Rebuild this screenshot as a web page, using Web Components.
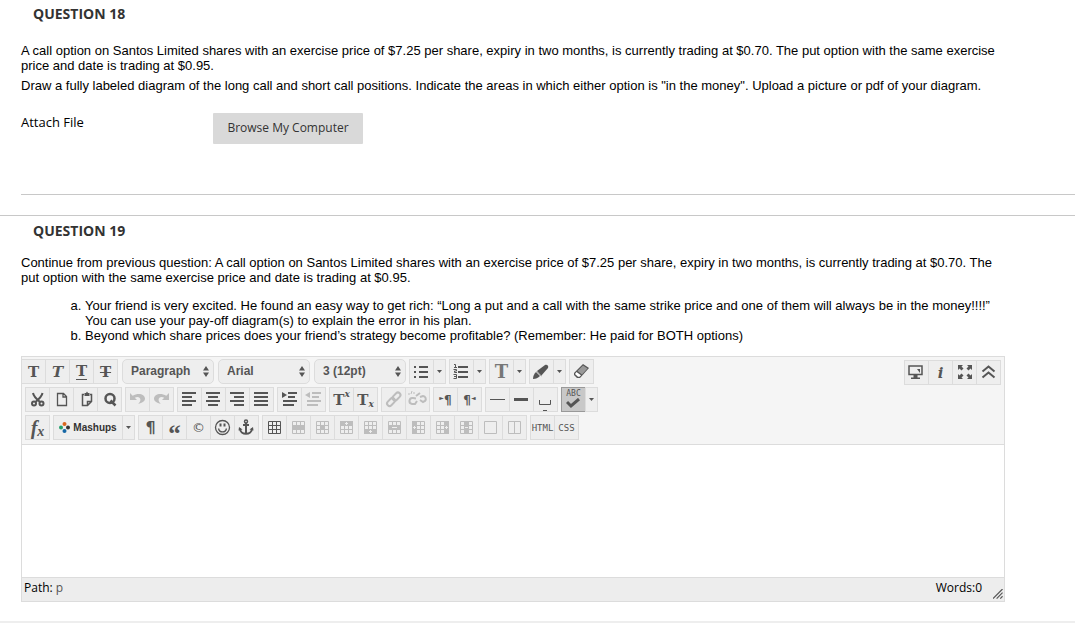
<!DOCTYPE html>
<html lang="en">
<head>
<meta charset="utf-8">
<title>Quiz</title>
<style>
  body { margin: 0; background: #fff; color: #000; font: 13px/15px "Liberation Sans", Arial, sans-serif; }
  p { margin: 0 0 5px; }
  ol { margin: 13px 0; padding-left: 64px; list-style: lower-alpha; }
</style>
</head>
<body>
<quiz-page>
  <quiz-question heading="QUESTION 18" class="first">
    <p>A call option on Santos Limited shares with an exercise price of $7.25 per share, expiry in two months, is currently trading at $0.70. The put option with the same exercise price and date is trading at $0.95.</p>
    <p>Draw a fully labeled diagram of the long call and short call positions. Indicate the areas in which either option is "in the money". Upload a picture or pdf of your diagram.</p>
    <attach-file slot="answer"></attach-file>
  </quiz-question>
  <quiz-question heading="QUESTION 19">
    <p>Continue from previous question: A call option on Santos Limited shares with an exercise price of $7.25 per share, expiry in two months, is currently trading at $0.70. The put option with the same exercise price and date is trading at $0.95.</p>
    <ol>
      <li>Your friend is very excited. He found an easy way to get rich: “Long a put and a call with the same strike price and one of them will always be in the money!!!!”<br>You can use your pay-off diagram(s) to explain the error in his plan.</li>
      <li>Beyond which share prices does your friend’s strategy become profitable? (Remember: He paid for BOTH options)</li>
    </ol>
    <text-editor slot="answer"></text-editor>
  </quiz-question>
</quiz-page>

<script>
const define = (name, html) => customElements.define(name, class extends HTMLElement {
  connectedCallback() {
    if (this.shadowRoot) return;
    const root = this.attachShadow({ mode: 'open' });
    const template = document.createElement('template');
    template.innerHTML = typeof html === 'function' ? html(this) : html;
    root.append(template.content.cloneNode(true));
  }
});

const lines = (rows) => rows.map(([x, y, w, h = 2]) => `<rect x="${x}" y="${y}" width="${w}" height="${h}"/>`).join('');
const grid = (fill) => `${fill}<path d="M5.5 5.5h12v12h-12zM9.5 5.5v12M13.5 5.5v12M5.5 9.5h12M5.5 13.5h12" fill="none" stroke="currentColor"/>`;
const mark = (x, y) => `<path d="M${x - 1} ${y + .5}h3M${x + .5} ${y - 1}v3" stroke="#eee"/>`;
const curl = '<path d="M4 5v7h7L8.8 9.800c2.600-1.700 5.700-.6 5.600 2 0 1.500-.7 2.700-2.200 4 4-.8 6.800-2.600 6.800-5 0-4.500-6.600-6.500-12.300-3z"/>';

const icons = {
  cut: '<g fill="none" stroke="currentColor" stroke-width="2"><circle cx="8" cy="15.500" r="2"/><circle cx="15.500" cy="15.500" r="2"/><path d="M7 5c.5 3 3.500 6 7 9M16.500 5c-.5 3-3.500 6-7 9"/></g>',
  page: '<path d="M7.500 5.500h6l3 3v9h-9zM13 5.500v3.500h3.500" fill="none" stroke="currentColor" stroke-width="1.300"/>',
  paste: '<path d="M10 6.500H8.500v11h5l4-4v-7H16M17 13.500h-3.500v3.500" fill="none" stroke="currentColor" stroke-width="1.500"/><path d="M10.500 5h1.500l1-1.500L14 5h1.500v3h-5z"/>',
  find: '<circle cx="12" cy="10.500" r="4.500" fill="none" stroke="currentColor" stroke-width="2.500"/><path d="M12.500 12.500l5 5" stroke="currentColor" stroke-width="2.500"/>',
  undo: curl,
  redo: `<g transform="translate(23 0) scale(-1 1)">${curl}</g>`,
  left: lines([[4,4,14],[4,8,10],[4,12,14],[4,16,10]]),
  center: lines([[4,4,14],[6,8,10],[4,12,14],[6,16,10]]),
  right: lines([[4,4,14],[8,8,10],[4,12,14],[8,16,10]]),
  justify: lines([[4,4,14],[4,8,14],[4,12,14],[4,16,14]]),
  indent: lines([[10,4,9],[10,8,7],[5,12,14],[5,16,11]]) + '<path d="M4 4l5 3-5 3z"/>',
  outdent: lines([[10,4,9],[10,8,7],[5,12,14],[5,16,11]]) + '<path d="M8 4L3 7l5 3z"/>',
  link: '<g fill="none" stroke="currentColor" stroke-width="2"><rect x="10" y="6" width="9" height="5" rx="2.500" transform="rotate(-45 14.500 8.500)"/><rect x="4.500" y="11.500" width="9" height="5" rx="2.500" transform="rotate(-45 9 14)"/></g>',
  unlink: '<g fill="none" stroke="currentColor" stroke-width="2"><path d="M10 10.500L7 10a3 3 0 0 0-1 6h3l2-3M14 9l3-1a3 3 0 0 1 2 5l-2 1-3-2M10 8l4-3"/><path d="M3 5v2M6 3l-1 3M8 4v2" stroke-width="1"/></g>',
  rule: lines([[4,11,15,1]]),
  bold: lines([[4,10,14,3]]),
  space: '<path d="M5.500 12v4.500h11V12M9 22.500h4" fill="none" stroke="currentColor"/>',
  bullets: lines([[9,6,9],[9,11,9],[9,16,9],[4,6,2],[4,11,2],[4,16,2]]),
  numbers: lines([[8,6,10],[8,11,10],[8,16,10]]) + '<path d="M4 4.500h1.500v3M4 7.500h3M3.500 9.500h3v1.500h-2v1.500h2.500M3.500 14.500h3v4h-3M4 16.500h2.500" fill="none" stroke="currentColor"/>',
  marker: '<path d="M3 19c0-3 1-5 3-7l4 4c-2 2-4 3-7 3z"/><path d="M7 11l8-6c2-1 4 1 3 3l-7 8z"/><path d="M6.500 11.500l5 4.500" stroke="#aaa"/>',
  eraser: '<path d="M4 13L13 4l6 4-9 10H7l-3-3z"/><path d="M13 5.500l4.500 3-5.500 6-4.500-3.500z" fill="#999"/><path d="M6.500 12l4.500 3.300-1.500 1.500H8L5 14z" fill="#fff"/>',
  monitor: '<path d="M4 5h13v8.500H4z" fill="none" stroke="currentColor" stroke-width="1.500"/><path d="M12 8h3v4zM8.500 14h4v2.500H15V18H6v-1.500h2.500z"/>',
  expand: '<path d="M5 4h5L8.500 5.500l2 2-2 2-2-2L5 9zM19 4h-5l1.500 1.500-2 2 2 2 2-2L19 9zM5 18h5l-1.500-1.500 2-2-2-2-2 2L5 13zM19 18h-5l1.500-1.500-2-2 2-2 2 2L19 13z"/>',
  collapse: '<path d="M5.500 10.500l6-5 6 5M5.500 16.500l6-5 6 5" fill="none" stroke="currentColor" stroke-width="2"/>',
  smile: '<circle cx="11.500" cy="11.500" r="7" fill="none" stroke="currentColor" stroke-width="1.300"/><path d="M7.500 12.500c1 4.500 7 4.500 8 0" fill="none" stroke="currentColor" stroke-width="1.300"/><rect x="8.500" y="7.500" width="2" height="3"/><rect x="12.500" y="7.500" width="2" height="3"/>',
  anchor: '<circle cx="11" cy="5.500" r="1.500" fill="none" stroke="currentColor" stroke-width="1.500"/><path d="M11 7v10M8 9h6M5 12.500c0 7 12 7 12 0" fill="none" stroke="currentColor" stroke-width="2"/><path d="M3.500 14.500L4 11l3.500 2.500zM18.500 14.500L18 11l-3.500 2.500z"/>',
  table: grid(''),
  row: grid(lines([[5,9,13,5]])),
  cell: grid(lines([[9,9,5,5]])),
  above: grid(lines([[5,5,13,5]])) + mark(11, 7),
  below: grid(lines([[5,13,13,5]])) + mark(11, 15),
  delrow: grid(lines([[5,9,13,5]])) + '<path d="M9 11.500h5" stroke="#eee"/>',
  before: grid(lines([[5,5,5,13]])) + mark(7, 11),
  after: grid(lines([[13,5,5,13]])) + mark(15, 11),
  delcol: grid(lines([[9,5,5,13]])) + '<path d="M10 11.500h3" stroke="#eee"/>',
  merge: '<path d="M5.500 5.500h12v12h-12z" fill="none" stroke="currentColor"/>',
  split: '<path d="M5.500 5.500h12v12h-12zM11.500 5.500v12" fill="none" stroke="currentColor"/>',
  arrow: '<path d="M3 10h5l-2.500 3z"/>'
};

define('quiz-page', `
  <style>
    :host { display: block; min-height: 100vh; box-sizing: border-box; border-bottom: 2px solid #eee; }
  </style><slot></slot>`);

define('quiz-question', host => `
  <style>
    :host { display: block; padding: 5px 70px 0 21px; border-top: 1px solid #c8c8c8; }
    :host(.first) { padding: 4px 70px 50px 21px; border: 0; margin-bottom: 20px; }
    h2 { margin: 0 12px 14px; font: bold 14px/20px "Open Sans", sans-serif; color: #333; }
    :host(.first) h2 { margin-bottom: 19px; }
    hr { display: none; margin: 50px -70px -50px 0; border: 0; border-top: 1px solid #c8c8c8; }
    :host(.first) hr { display: block; }
  </style>
  <h2>${host.getAttribute('heading')}</h2><slot></slot><slot name="answer"></slot><hr>`);

define('attach-file', `
  <style>
    :host { display: flex; align-items: flex-start; margin-top: 20px; font: 13px/19px "Open Sans", sans-serif; }
    span { width: 192px; }
    button { height: 31px; width: 150px; padding: 0 0 2px; border: 0; border-radius: 1px; background: #d9d9d9; color: #333; font: 12px/19px "Open Sans", sans-serif; }
  </style>
  <span id="l">Attach File</span><button aria-describedby="l">Browse My Computer</button>`);

define('tool-group', `
  <style>
    :host { display: flex; flex: none; }
    ::slotted(:not(:first-child)) { margin-left: -1px; }
  </style><slot></slot>`);

define('tool-button', host => {
  const icon = host.getAttribute('icon');
  return `
  <style>
    :host { display: block; flex: none; width: 25px; height: 25px; color: #555; }
    :host([icon=arrow]) { width: 13px; }
    :host([wide]) { width: 70px; }
    :host([edge]) { width: 24px; }
    :host([edge]) button { border-left: 0; }
    :host([off]) { color: #bdbdbd; }
    button { display: flex; align-items: center; justify-content: center; width: 100%; height: 100%; box-sizing: border-box; padding: 0;
      overflow: hidden; border: 1px solid #dcdcdc; background: #eee; color: inherit; font: bold 15px/20px "DejaVu Serif", serif; white-space: nowrap; }
    :host([on]) button { background: #c8c8c8; border-color: #999; }
    svg { display: block; flex: none; width: 23px; height: 23px; fill: currentColor; }
    :host([icon=arrow]) svg { width: 11px; }
  </style>
  <button aria-label="${host.getAttribute('label') || icon || ''}">${icon ? `<svg viewBox="0 0 ${icon === 'arrow' ? 11 : 23} 23">${icons[icon]}</svg>` : '<slot></slot>'}</button>`;
});

define('tool-select', host => `
  <style>
    :host { display: block; position: relative; flex: none; width: 92px; height: 25px; margin-left: 1px; color: #555; }
    select { appearance: none; width: 100%; height: 100%; padding: 0 20px 2px 8px; border: 1px solid #dcdcdc; border-radius: 5px;
      background: #eee; color: inherit; font: bold 12px/20px "Liberation Sans", Arial, sans-serif; }
    svg { position: absolute; right: 5px; top: 7px; width: 6px; height: 11px; fill: currentColor; pointer-events: none; }
  </style>
  <select aria-label="${host.getAttribute('label')}"><option>${host.getAttribute('value')}</option></select>
  <svg viewBox="0 0 6 11"><path d="M0 4.500l3-4.500 3 4.500zM0 6.500h6l-3 4.500z"/></svg>`);

const tools = (names, attrs = '') => names.split(' ').map(n => `<tool-button icon="${n}" ${attrs}></tool-button>`).join('');
const group = (content) => `<tool-group>${content}</tool-group>`;
const text = (label, content, attrs = '') => `<tool-button label="${label}" ${attrs}>${content}</tool-button>`;

define('editor-toolbar', `
  <style>
    :host { display: flex; justify-content: space-between; align-items: flex-start; padding: 2px 3px 4px 0; background: #f5f5f5; border-bottom: 1px solid #dcdcdc; }
    .rows { display: grid; gap: 3px; }
    .row { display: flex; gap: 3px; padding-left: 3px; }
    .row:first-child { padding-left: 0; }
    .end { margin-top: 1px; }
    i { font-style: italic; }
    u { text-decoration: none; border-bottom: 1px solid; line-height: 15px; }
    .big { font-size: 18px; color: #777; }
    .raise, .lower { font: italic bold 9px/9px "DejaVu Serif", serif; }
    .raise { margin-bottom: 10px; }
    .lower { margin-top: 9px; }
    .fx { font: italic bold 20px/20px "Liberation Serif", serif; }
    .fx.lower { font-size: 14px; }
    .mono { font: 9px/12px "DejaVu Sans Mono", monospace; }
    .para { font: bold 16px/20px "DejaVu Sans", sans-serif; }
    .small { font: bold 12px/20px "DejaVu Sans", sans-serif; }
    .tip { font: 6px/20px "DejaVu Sans", sans-serif; margin-bottom: 4px; }
    .copy { font: 13px/20px "DejaVu Sans", sans-serif; }
    .quote { font: bold 25px/20px "Liberation Serif", serif; padding-top: 12px; }
    .mash { font: bold 10px/20px "Liberation Sans", sans-serif; color: #333; }
    .dots { width: 11px; height: 11px; margin-right: 3px; }
    .check { display: grid; justify-items: center; font: 8px/8px "DejaVu Sans Mono", monospace; }
    .check svg { width: 14px; height: 11px; }
  </style>
  <div class="rows">
    <div class="row">
      ${group(text('Bold', 'T', 'edge') + text('Italic', '<i>T</i>') + text('Underline', '<u>T</u>') + text('Strikethrough', '<s>T</s>'))}
      <tool-select label="Format" value="Paragraph"></tool-select>
      <tool-select label="Font" value="Arial"></tool-select>
      <tool-select label="Size" value="3 (12pt)"></tool-select>
      ${group(tools('bullets arrow'))}${group(tools('numbers arrow'))}
      ${group(text('Text colour', '<span class="big">T</span>') + tools('arrow'))}
      ${group(tools('marker arrow'))}${group(tools('eraser'))}
    </div>
    <div class="row">
      ${group(tools('cut page paste find'))}${group(tools('undo redo', 'off'))}
      ${group(tools('left center right justify'))}${group(tools('indent') + tools('outdent', 'off'))}
      ${group(text('Superscript', 'T<span class="raise">x</span>') + text('Subscript', 'T<span class="lower">x</span>'))}
      ${group(tools('link unlink', 'off'))}
      ${group(text('Left to right', '<span class="tip">►</span><span class="small">¶</span>') + text('Right to left', '<span class="small">¶</span><span class="tip">◄</span>'))}
      ${group(tools('rule bold space'))}
      ${group(text('Spelling', '<span class="check">ABC<svg viewBox="0 0 14 11"><path d="M1 4l4 4 8-7" fill="none" stroke="currentColor" stroke-width="3"/></svg></span>', 'on') + tools('arrow'))}
    </div>
    <div class="row">
      ${group(text('Math', '<span class="fx">f</span><span class="fx lower">x</span>'))}
      ${group(text('Mashups', '<svg class="dots" viewBox="0 0 11 11"><circle cx="5.500" cy="2" r="2" fill="#d9661f"/><circle cx="9" cy="5.500" r="2" fill="#333"/><circle cx="5.500" cy="9" r="2" fill="#1768a6"/><circle cx="2" cy="5.500" r="2" fill="#22a06b"/></svg><span class="mash">Mashups</span>', 'wide') + tools('arrow'))}
      ${group(text('Show marks', '<span class="para">¶</span>') + text('Quote', '<span class="quote">“</span>') + text('Symbol', '<span class="copy">©</span>') + tools('smile anchor'))}
      ${group(tools('table') + tools('row cell above below delrow before after delcol merge split', 'off'))}
      ${group(text('HTML', '<span class="mono">HTML</span>') + text('CSS', '<span class="mono">CSS</span>'))}
    </div>
  </div>
  <tool-group class="end">${tools('monitor')}${text('Help', '<i>i</i>')}${tools('expand collapse')}</tool-group>`);

define('text-editor', `
  <style>
    :host { display: block; border: 1px solid #dcdcdc; font: 12px/19px "Open Sans", sans-serif; }
    textarea { display: block; width: 100%; height: 132px; box-sizing: border-box; padding: 8px; border: 0; outline: 0; resize: none; background: #fff; font: inherit; }
    footer { display: flex; justify-content: space-between; height: 23px; padding: 0 1px 0 2px; border-top: 1px solid #dcdcdc; background: #ededed; }
    a { color: #555; text-decoration: none; }
    .words { display: flex; align-items: flex-end; gap: 11px; }
    .words span { align-self: flex-start; }
    svg { width: 10px; height: 10px; margin-bottom: 2px; }
  </style>
  <editor-toolbar></editor-toolbar>
  <textarea aria-label="Answer"></textarea>
  <footer><span>Path: <a href="#">p</a></span><span class="words"><span>Words:0</span>
    <svg viewBox="0 0 11 11"><path d="M0 10.500L10.500 0M4 10.500L10.500 4M8 10.500L10.500 8" stroke="#555" stroke-width="1.300"/></svg></span></footer>`);
</script>
</body>
</html>
